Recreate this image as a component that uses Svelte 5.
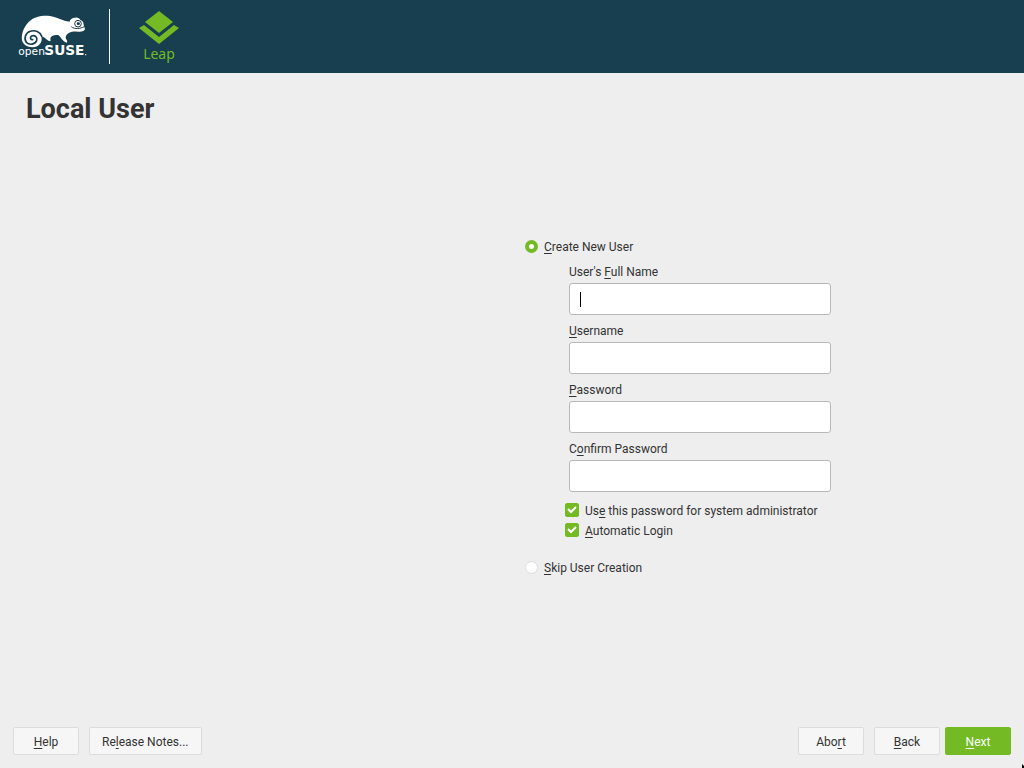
<script>
  let mode = "create";
  let useForAdmin = true;
  let autoLogin = true;

  // each label is split around its keyboard shortcut letter
  let fields = [
    { id: "fullname", pre: "User's ", key: "F", post: "ull Name", type: "text", value: "", cursor: true },
    { id: "username", pre: "", key: "U", post: "sername", type: "text", value: "" },
    { id: "password", pre: "", key: "P", post: "assword", type: "password", value: "" },
    { id: "confirm", pre: "C", key: "o", post: "nfirm Password", type: "password", value: "" },
  ];
</script>

<div class="page">
  <header>
    <svg class="logo" viewBox="0 0 270 192" role="img" aria-label="openSUSE">
      <path fill="#fff" d="M36 106C33 88 41 66 56 51C72 36 94 31 119 33C142 36 157 48 179 50C179 44 188 37 197 38C203 37 209 40 211 45C218 47 221 52 221 60L225 72C224 79 214 81 205 80C195 80 188 78 181 82C172 86 167 91 167 98C168 104 174 106 171 113C160 112 154 99 146 91C138 88 127 91 123 96C119 100 123 104 121 109C112 108 105 96 94 94C97 105 94 117 83 123C67 131 41 126 36 106Z" />
      <path fill="none" stroke="#173f4f" stroke-width="5" stroke-linecap="round" d="M95 94C91 81 75 74 61 79C46 84 41 101 49 112C58 121 75 119 80 107C83 96 74 89 65 93C59 97 61 105 68 104" />
      <path fill="none" stroke="#173f4f" stroke-width="3" d="M184 65C195 74 210 71 223 65" />
      <circle cx="204" cy="56" r="10" fill="#fff" stroke="#173f4f" stroke-width="3" />
      <ellipse cx="205" cy="56" rx="5" ry="4" fill="#173f4f" />
      <text class="open" x="25" y="151">open</text>
      <text class="suse" x="103" y="151">SUSE</text>
      <circle cx="227" cy="149" r="2" fill="#fff" />
    </svg>
    <div class="divider"></div>
    <svg class="leap" viewBox="0 0 42 54" role="img" aria-label="Leap">
      <path fill="#73ba25" d="M21 1L35 12L21 23L7 12ZM1 18L6 15L21 27L36 15L41 18L21 34Z" />
      <text x="21" y="49" text-anchor="middle">Leap</text>
    </svg>
  </header>

  <h1>Local User</h1>

  <main>
    <form id="user" on:submit|preventDefault>
      <label class="choice">
        <input type="radio" name="mode" value="create" bind:group={mode} />
        <span><u>C</u>reate New User</span>
      </label>

      <div class="fields">
        {#each fields as field}
          <div class="field">
            <label for={field.id}>{field.pre}<u>{field.key}</u>{field.post}</label>
            <div class="box">
              <input id={field.id} type={field.type} value={field.value} autocomplete="off" />
              {#if field.cursor}<i class="caret"></i>{/if}
            </div>
          </div>
        {/each}
      </div>

      <div class="options">
        <label class="check">
          <input type="checkbox" bind:checked={useForAdmin} />
          <svg viewBox="0 0 14 14"><path d="M3 6L6 9L11 4" /></svg>
          <span>Us<u>e</u> this password for system administrator</span>
        </label>
        <label class="check">
          <input type="checkbox" bind:checked={autoLogin} />
          <svg viewBox="0 0 14 14"><path d="M3 6L6 9L11 4" /></svg>
          <span><u>A</u>utomatic Login</span>
        </label>
      </div>

      <label class="choice">
        <input type="radio" name="mode" value="skip" bind:group={mode} />
        <span><u>S</u>kip User Creation</span>
      </label>
    </form>
  </main>

  <footer>
    <div class="group">
      <button type="button"><u>H</u>elp</button>
      <button type="button">Re<u>l</u>ease Notes...</button>
    </div>
    <div class="group">
      <button type="button">Abo<u>r</u>t</button>
      <button type="button"><u>B</u>ack</button>
      <button class="next" form="user"><u>N</u>ext</button>
    </div>
  </footer>

  <svg class="pointer" viewBox="0 0 3 4"><path d="M1 0L3 2V4H1Z" /></svg>
</div>

<style>
  :global(body) {
    background: #eeeeee;
  }

  .page {
    position: relative;
    display: flex;
    flex-direction: column;
    min-height: 100vh;
    overflow: hidden;
    background: #eeeeee;
    color: #333;
    font-family: Roboto, "Liberation Sans", sans-serif;
    font-size: 12px;
    line-height: 20px;
  }

  header {
    display: flex;
    align-items: center;
    height: 73px;
    padding-left: 10px;
    background: #173f4f;
  }

  .logo {
    width: 90px;
    height: 64px;
  }

  .open,
  .suse {
    font-family: "DejaVu Sans", sans-serif;
    font-size: 32px;
    fill: #fff;
  }

  .suse {
    font-size: 41px;
    font-weight: bold;
  }

  .divider {
    width: 1px;
    height: 55px;
    margin: 0 28px 0 9px;
    background: #fff;
  }

  .leap {
    width: 42px;
    height: 54px;
  }

  .leap text {
    font-family: "Noto Sans", sans-serif;
    font-size: 14px;
    fill: #73ba25;
  }

  h1 {
    margin: 20px 26px 0;
    font-size: 27px;
    font-weight: bold;
    line-height: 32px;
  }

  u {
    text-decoration-thickness: 1px;
    text-underline-offset: 2px;
    text-decoration-skip-ink: none;
  }

  main {
    display: grid;
    flex: 1;
    grid-template-columns: 525fr 306px 193fr;
    align-items: center;
    padding-bottom: 37px;
  }

  form {
    grid-column: 2;
  }

  .choice,
  .check {
    display: flex;
    align-items: center;
    gap: 6px;
  }

  input {
    appearance: none;
    box-sizing: border-box;
    margin: 0;
    outline: none;
    font: inherit;
  }

  .choice input {
    width: 13px;
    height: 13px;
    margin-bottom: 2px;
    border: 1px solid #dcdcdc;
    border-radius: 50%;
    background: #fff;
  }

  .choice input:checked {
    border: none;
    background: radial-gradient(circle, #fff 2px, #73ba25 3px);
  }

  .fields {
    display: flex;
    flex-direction: column;
    gap: 5px;
    margin: 4px 0 9px 44px;
  }

  .field label {
    display: block;
    line-height: 22px;
  }

  .box {
    position: relative;
  }

  .box input {
    display: block;
    width: 100%;
    height: 32px;
    padding: 0 10px;
    border: 1px solid #b8b8b8;
    border-radius: 3px;
    background: #fff;
    color: #333;
  }

  .caret {
    position: absolute;
    top: 9px;
    left: 11px;
    width: 1px;
    height: 15px;
    background: #000;
  }

  .box input:focus + .caret {
    display: none;
  }

  .options {
    margin: 0 0 17px 40px;
  }

  .check {
    position: relative;
  }

  .check input {
    width: 14px;
    height: 14px;
    margin-bottom: 2px;
    border: 1px solid #dcdcdc;
    border-radius: 2px;
    background: #fff;
  }

  .check input:checked {
    border-color: #73ba25;
    background: #73ba25;
  }

  .check svg {
    position: absolute;
    top: 2px;
    left: 0;
    width: 14px;
    height: 14px;
    fill: none;
    stroke: #fff;
    stroke-width: 2;
  }

  footer {
    display: flex;
    justify-content: space-between;
    padding: 0 13px 13px;
  }

  .group {
    display: flex;
    gap: 10px;
  }

  button {
    min-width: 66px;
    height: 28px;
    padding: 2px 12px 0;
    border: 1px solid #dcdcdc;
    border-radius: 2px;
    background: #f6f6f6;
    color: #333;
    font: inherit;
  }

  .next {
    margin-left: -5px;
    border-color: #73ba25;
    background: #73ba25;
    color: #fff;
  }

  .pointer {
    position: absolute;
    right: 0;
    bottom: 0;
    width: 3px;
    height: 4px;
  }
</style>
